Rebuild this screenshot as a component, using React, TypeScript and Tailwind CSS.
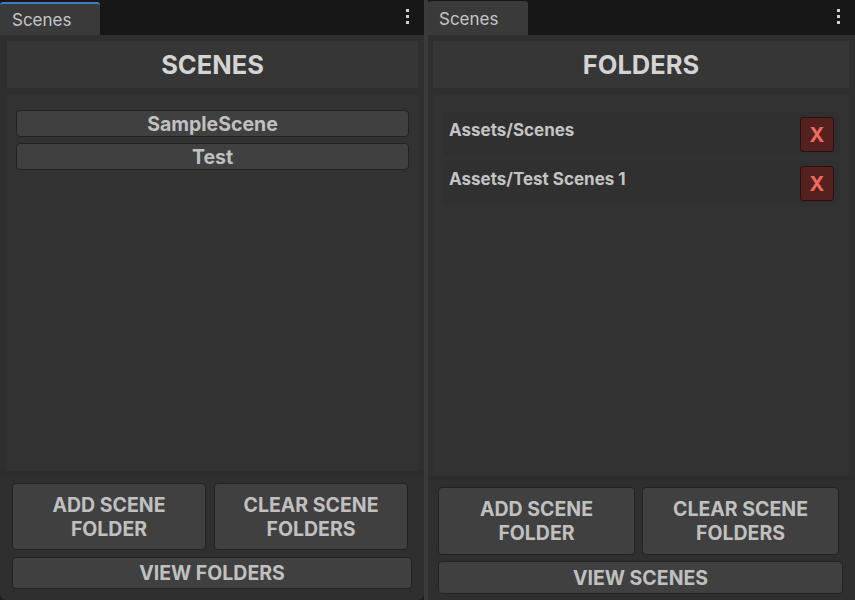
import React from 'react';

const font = { fontFamily: 'Inter, "Noto Sans", sans-serif' };

const Kebab = () => (
  <div className="flex flex-col gap-[3px] mr-[15px] mb-[11px]">
    <span className="block w-[3px] h-[3px] bg-[#d0d0d0]" />
    <span className="block w-[3px] h-[3px] bg-[#d0d0d0]" />
    <span className="block w-[3px] h-[3px] bg-[#d0d0d0]" />
  </div>
);

const TabBar = ({ active }: { active?: boolean }) => (
  <div className="h-[35px] bg-[#171717] flex items-end justify-between shrink-0">
    <div
      className={
        active
          ? 'w-[100px] h-[33px] bg-[#3a3a3a] rounded-t-[3px] border-t-2 border-[#3d7bc0] pl-[12px] pt-[2px] flex items-center text-[17px] text-[#c6c6c6]'
          : 'w-[100px] h-[34px] bg-[#3a3a3a] rounded-t-[3px] pl-[11px] pt-[4px] flex items-center text-[17px] text-[#c6c6c6]'
      }
    >
      Scenes
    </div>
    <Kebab />
  </div>
);

const Btn = ({ children, className }: { children: React.ReactNode; className: string }) => (
  <div
    className={
      'bg-[#404040] border border-[#222] rounded-[4px] flex items-center justify-center text-center font-bold text-[19.5px] leading-[24px] text-[#c0c0c0] ' +
      className
    }
  >
    {children}
  </div>
);

const Header = ({ title }: { title: string }) => (
  <div className="h-[47px] bg-[#363636] flex items-center justify-center font-bold text-[25.5px] text-[#d4d4d4] shrink-0 pt-[2px]">
    {title}
  </div>
);

const ScenesPanel = () => (
  <div className="w-[424px] flex flex-col">
    <TabBar active />
    <div className="flex-1 bg-[#2f2f2f] rounded-b-[6px] flex flex-col pt-[6px]">
      <div className="ml-[7px] mr-[6px] flex flex-col gap-[7px] flex-1">
        <Header title="SCENES" />
        <div className="flex-1 bg-[#323232] px-[9px] pt-[15px] flex flex-col gap-[6px]">
          <Btn className="h-[27px]">SampleScene</Btn>
          <Btn className="h-[27px]">Test</Btn>
        </div>
      </div>
      <div className="h-[4px] bg-[#2d2d2d]" />
      <div className="px-[12px] pt-[8px] pb-[11px] flex flex-col gap-[7px]">
        <div className="flex gap-[8px] pr-[4px]">
          <Btn className="flex-1 h-[67px]">ADD SCENE<br />FOLDER</Btn>
          <Btn className="flex-1 h-[67px]">CLEAR SCENE<br />FOLDERS</Btn>
        </div>
        <Btn className="h-[32px]">VIEW FOLDERS</Btn>
      </div>
    </div>
  </div>
);

const FolderRow = ({ path }: { path: string }) => (
  <div className="h-[44px] bg-[#303030] flex items-start justify-between pl-[6px] pr-[5px]">
    <span className="font-bold text-[17px] text-[#c4c4c4] mt-[6px]">{path}</span>
    <div className="mt-[5px] w-[34px] h-[35px] bg-[#55211e] border border-[#2a1010] rounded-[3px] flex items-center justify-center font-bold text-[20px] text-[#ef6a60]">
      X
    </div>
  </div>
);

const FoldersPanel = () => (
  <div className="flex-1 flex flex-col">
    <TabBar />
    <div className="flex-1 bg-[#2f2f2f] flex flex-col pt-[6px]">
      <div className="ml-[5px] mr-[6px] flex flex-col gap-[7px] flex-1">
        <Header title="FOLDERS" />
        <div className="flex-1 bg-[#323232] px-[10px] pt-[17px] flex flex-col gap-[5px]">
          <FolderRow path="Assets/Scenes" />
          <FolderRow path="Assets/Test Scenes 1" />
        </div>
      </div>
      <div className="h-[4px] bg-[#2d2d2d]" />
      <div className="pl-[10px] pr-[12px] pt-[7px] pb-[6px] flex flex-col gap-[6px]">
        <div className="flex gap-[7px] pr-[4px]">
          <Btn className="flex-1 h-[68px]">ADD SCENE<br />FOLDER</Btn>
          <Btn className="flex-1 h-[68px]">CLEAR SCENE<br />FOLDERS</Btn>
        </div>
        <Btn className="h-[33px]">VIEW SCENES</Btn>
      </div>
    </div>
  </div>
);

export default function App() {
  return (
    <div className="w-[855px] h-[600px] flex bg-[#1e1e1e] overflow-hidden" style={font}>
      <ScenesPanel />
      <div className="w-[4px] bg-[#3b3b3b]" />
      <FoldersPanel />
    </div>
  );
}
